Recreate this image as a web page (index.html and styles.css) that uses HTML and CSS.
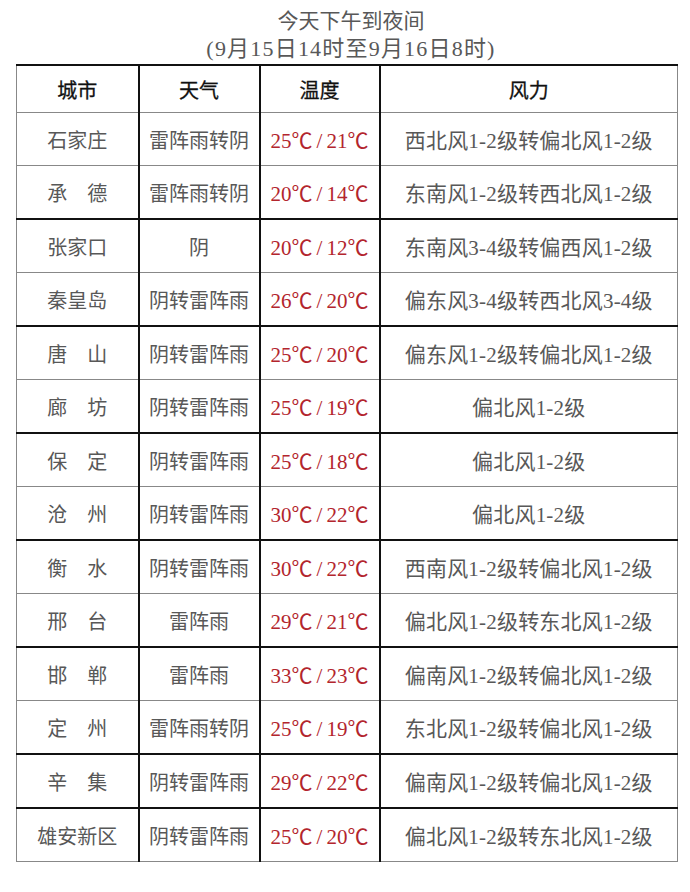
FILE: index.html
```html
<!DOCTYPE html>
<html lang="zh">
<head>
<meta charset="utf-8">
<link rel="stylesheet" href="styles.css">
</head>
<body>
<div class="title">
  <div class="l1">今天下午到夜间</div>
  <div class="l2">(9月15日14时至9月16日8时)</div>
</div>
<table class="wx">
  <colgroup>
    <col class="c1"><col class="c2"><col class="c3"><col class="c4">
  </colgroup>
  <thead>
    <tr class="head"><th>城市</th><th>天气</th><th>温度</th><th>风力</th></tr>
  </thead>
  <tbody>
    <tr class="g"><td>石家庄</td><td>雷阵雨转阴</td><td class="t">25<span class="d">℃</span><span class="s">/</span>21<span class="d">℃</span></td><td class="w">西北风1-2级转偏北风1-2级</td></tr>
    <tr class="b"><td>承　德</td><td>雷阵雨转阴</td><td class="t">20<span class="d">℃</span><span class="s">/</span>14<span class="d">℃</span></td><td class="w">东南风1-2级转西北风1-2级</td></tr>
    <tr class="g"><td>张家口</td><td>阴</td><td class="t">20<span class="d">℃</span><span class="s">/</span>12<span class="d">℃</span></td><td class="w">东南风3-4级转偏西风1-2级</td></tr>
    <tr class="b"><td>秦皇岛</td><td>阴转雷阵雨</td><td class="t">26<span class="d">℃</span><span class="s">/</span>20<span class="d">℃</span></td><td class="w">偏东风3-4级转西北风3-4级</td></tr>
    <tr class="g"><td>唐　山</td><td>阴转雷阵雨</td><td class="t">25<span class="d">℃</span><span class="s">/</span>20<span class="d">℃</span></td><td class="w">偏东风1-2级转偏北风1-2级</td></tr>
    <tr class="b"><td>廊　坊</td><td>阴转雷阵雨</td><td class="t">25<span class="d">℃</span><span class="s">/</span>19<span class="d">℃</span></td><td class="w">偏北风1-2级</td></tr>
    <tr class="g"><td>保　定</td><td>阴转雷阵雨</td><td class="t">25<span class="d">℃</span><span class="s">/</span>18<span class="d">℃</span></td><td class="w">偏北风1-2级</td></tr>
    <tr class="b"><td>沧　州</td><td>阴转雷阵雨</td><td class="t">30<span class="d">℃</span><span class="s">/</span>22<span class="d">℃</span></td><td class="w">偏北风1-2级</td></tr>
    <tr class="g"><td>衡　水</td><td>阴转雷阵雨</td><td class="t">30<span class="d">℃</span><span class="s">/</span>22<span class="d">℃</span></td><td class="w">西南风1-2级转偏北风1-2级</td></tr>
    <tr class="b"><td>邢　台</td><td>雷阵雨</td><td class="t">29<span class="d">℃</span><span class="s">/</span>21<span class="d">℃</span></td><td class="w">偏北风1-2级转东北风1-2级</td></tr>
    <tr class="g"><td>邯　郸</td><td>雷阵雨</td><td class="t">33<span class="d">℃</span><span class="s">/</span>23<span class="d">℃</span></td><td class="w">偏南风1-2级转偏北风1-2级</td></tr>
    <tr class="b"><td>定　州</td><td>雷阵雨转阴</td><td class="t">25<span class="d">℃</span><span class="s">/</span>19<span class="d">℃</span></td><td class="w">东北风1-2级转偏北风1-2级</td></tr>
    <tr class="b"><td>辛　集</td><td>阴转雷阵雨</td><td class="t">29<span class="d">℃</span><span class="s">/</span>22<span class="d">℃</span></td><td class="w">偏南风1-2级转偏北风1-2级</td></tr>
    <tr class="last"><td>雄安新区</td><td>阴转雷阵雨</td><td class="t">25<span class="d">℃</span><span class="s">/</span>20<span class="d">℃</span></td><td class="w">偏北风1-2级转东北风1-2级</td></tr>
  </tbody>
</table>
</body>
</html>
```

FILE: styles.css
```css
html, body {
  margin: 0;
  padding: 0;
  background: #ffffff;
}
body {
  width: 690px;
  height: 892px;
  font-family: "Liberation Serif", "Noto Sans CJK SC", serif;
  color: #555555;
}
.title {
  padding-top: 8px;
  padding-left: 12px;
  text-align: center;
  font-size: 21px;
  line-height: 27px;
  color: #585858;
}
.title .l2 {
  font-size: 22px;
  letter-spacing: 1.2px;
}
.wx {
  margin-top: 2px;
  margin-left: 16px;
  width: 661px;
  border-collapse: collapse;
  table-layout: fixed;
  border-left: 1px solid #888;
  border-right: 1px solid #888;
}
.c1 { width: 122px; }
.c2 { width: 121px; }
.c3 { width: 120px; }
.c4 { width: 298px; }
.wx th, .wx td {
  padding: 0;
  text-align: center;
  vertical-align: middle;
  border-left: 2px solid #111;
  border-right: 2px solid #111;
}
.wx th:first-child, .wx td:first-child { border-left: 1px solid #888; }
.wx th:last-child, .wx td:last-child { border-right: 1px solid #888; }
.head th {
  height: 46px;
  font-weight: normal;
  font-size: 20px;
  color: #111;
  border-top: 2px solid #111;
  border-bottom: 1px solid #888;
  -webkit-text-stroke: 0.3px #111;
}
.wx td {
  height: 52px;
  font-size: 20px;
  color: #585858;
}
.wx td.w {
  font-size: 21px;
  letter-spacing: 0.2px;
}
.wx td.t {
  color: #b3252d;
  font-size: 21px;
}
.t .d {
  font-family: "Noto Sans CJK SC", sans-serif;
  font-size: 21px;
}
.t .s {
  padding: 0 4px;
}
tr.g td { border-bottom: 1px solid #888; }
tr.b td { border-bottom: 2px solid #111; }
tr.last td { border-bottom: 1px solid #888; }
```
